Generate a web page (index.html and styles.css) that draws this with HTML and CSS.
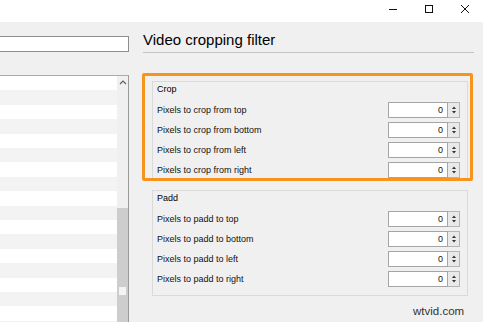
FILE: index.html
```html
<!DOCTYPE html>
<html lang="en">
<head>
    <meta charset="UTF-8">
    <title>Video cropping filter</title>
    <link rel="stylesheet" href="styles.css">
</head>
<body>
    <div class="titlebar">
        <div class="win-btn">
            <svg width="10" height="10" viewBox="0 0 10 10"><line x1="1" y1="5.5" x2="9" y2="5.5" stroke="#111" stroke-width="1"/></svg>
        </div>
        <div class="win-btn">
            <svg width="10" height="10" viewBox="0 0 10 10"><rect x="1.5" y="1.5" width="7" height="7" fill="none" stroke="#111" stroke-width="1"/></svg>
        </div>
        <div class="win-btn">
            <svg width="10" height="10" viewBox="0 0 10 10"><path d="M1 1 L9 9 M9 1 L1 9" stroke="#111" stroke-width="1"/></svg>
        </div>
    </div>

    <div class="main">
        <div class="side">
            <div class="search"></div>
            <div class="list">
                <div class="scrollbar">
                    <svg class="scroll-up" width="8" height="5" viewBox="0 0 8 5"><path d="M1 4 L4 1 L7 4" fill="none" stroke="#606060" stroke-width="1.2"/></svg>
                    <div class="thumb"><span class="thumb-mark"></span></div>
                </div>
            </div>
        </div>

        <div class="panel">
            <h1 class="title">Video cropping filter</h1>

            <div class="groups">
                <div class="group">
                    <div class="group-title">Crop</div>
                    <div class="rows">
                        <div class="row"><span>Pixels to crop from top</span><div class="spin"><div class="spin-field">0</div><div class="spin-btns"><svg width="8" height="12" viewBox="0 0 8 12"><path d="M2 5 L4 2.5 L6 5 Z M2 7 L4 9.5 L6 7 Z" fill="#333"/></svg></div></div></div>
                        <div class="row"><span>Pixels to crop from bottom</span><div class="spin"><div class="spin-field">0</div><div class="spin-btns"><svg width="8" height="12" viewBox="0 0 8 12"><path d="M2 5 L4 2.5 L6 5 Z M2 7 L4 9.5 L6 7 Z" fill="#333"/></svg></div></div></div>
                        <div class="row"><span>Pixels to crop from left</span><div class="spin"><div class="spin-field">0</div><div class="spin-btns"><svg width="8" height="12" viewBox="0 0 8 12"><path d="M2 5 L4 2.5 L6 5 Z M2 7 L4 9.5 L6 7 Z" fill="#333"/></svg></div></div></div>
                        <div class="row"><span>Pixels to crop from right</span><div class="spin"><div class="spin-field">0</div><div class="spin-btns"><svg width="8" height="12" viewBox="0 0 8 12"><path d="M2 5 L4 2.5 L6 5 Z M2 7 L4 9.5 L6 7 Z" fill="#333"/></svg></div></div></div>
                    </div>
                </div>

                <div class="group group-padd">
                    <div class="group-title">Padd</div>
                    <div class="rows">
                        <div class="row"><span>Pixels to padd to top</span><div class="spin"><div class="spin-field">0</div><div class="spin-btns"><svg width="8" height="12" viewBox="0 0 8 12"><path d="M2 5 L4 2.5 L6 5 Z M2 7 L4 9.5 L6 7 Z" fill="#333"/></svg></div></div></div>
                        <div class="row"><span>Pixels to padd to bottom</span><div class="spin"><div class="spin-field">0</div><div class="spin-btns"><svg width="8" height="12" viewBox="0 0 8 12"><path d="M2 5 L4 2.5 L6 5 Z M2 7 L4 9.5 L6 7 Z" fill="#333"/></svg></div></div></div>
                        <div class="row"><span>Pixels to padd to left</span><div class="spin"><div class="spin-field">0</div><div class="spin-btns"><svg width="8" height="12" viewBox="0 0 8 12"><path d="M2 5 L4 2.5 L6 5 Z M2 7 L4 9.5 L6 7 Z" fill="#333"/></svg></div></div></div>
                        <div class="row"><span>Pixels to padd to right</span><div class="spin"><div class="spin-field">0</div><div class="spin-btns"><svg width="8" height="12" viewBox="0 0 8 12"><path d="M2 5 L4 2.5 L6 5 Z M2 7 L4 9.5 L6 7 Z" fill="#333"/></svg></div></div></div>
                    </div>
                </div>

                <!-- annotation frame drawn over the Crop group -->
                <div class="highlight"></div>
            </div>
        </div>
    </div>

    <div class="watermark">wtvid.com</div>
</body>
</html>
```

FILE: styles.css
```css
body {
    margin: 0;
    width: 483px;
    height: 322px;
    overflow: hidden;
    background-color: #f0f0f0;
    font-family: "Liberation Sans", Arial, sans-serif;
    color: #000;
    position: relative;
}
.titlebar {
    height: 22px;
    background-color: #fff;
    display: flex;
    justify-content: flex-end;
}
.win-btn {
    width: 36px;
    height: 18px;
    display: flex;
    align-items: center;
    justify-content: center;
}
.main {
    display: flex;
    height: 300px;
}
.side {
    width: 129px;
    display: flex;
    flex-direction: column;
}
.search {
    margin-top: 14px;
    height: 14px;
    background-color: #fff;
    border: 1px solid #8e8e8e;
    border-left: none;
}
.list {
    flex: 1;
    margin-top: 23px;
    border-top: 1px solid #a9a9a9;
    border-right: 1px solid #9a9a9a;
    background: repeating-linear-gradient(#fff 0 14.4px, #f3f3f3 14.4px 28.8px);
    display: flex;
    justify-content: flex-end;
}
.scrollbar {
    width: 11px;
    background-color: #f0f0f0;
    display: flex;
    flex-direction: column;
    align-items: center;
}
.scroll-up {
    margin-top: 4px;
}
.thumb {
    margin-top: 123px;
    flex: 1;
    align-self: stretch;
    background-color: #cdcdcd;
    position: relative;
}
.thumb-mark {
    position: absolute;
    left: 2px;
    top: 79px;
    width: 7px;
    height: 8px;
    background-color: #f4f4f4;
}
.panel {
    flex: 1;
    padding: 0 9px 0 14px;
}
.title {
    margin: 9px 0 0;
    font-size: 15px;
    font-weight: normal;
    line-height: 18px;
    padding-bottom: 3px;
    border-bottom: 1px solid #c4c4c4;
}
.groups {
    position: relative;
    margin: 28px 6px 0 9px;
}
.group {
    border: 1px solid #dadada;
    padding: 1px 7px 1px 4px;
}
.group-padd {
    margin-top: 10px;
    padding-bottom: 8px;
}
.group-title {
    font-size: 9px;
    line-height: 12px;
    margin-bottom: 7px;
}
.rows {
    display: flex;
    flex-direction: column;
    gap: 4px;
}
.row {
    height: 16px;
    display: flex;
    align-items: center;
    justify-content: space-between;
    font-size: 9px;
    color: #111;
}
.spin {
    width: 72px;
    height: 16px;
    display: flex;
}
.spin-field {
    flex: 1;
    background-color: #fff;
    border: 1px solid #a5a5a5;
    text-align: right;
    padding-right: 4px;
    font-size: 9px;
    line-height: 14px;
}
.spin-btns {
    width: 11px;
    background-color: #e9e9e9;
    border: 1px solid #b5b5b5;
    border-left: none;
    display: flex;
    align-items: center;
    justify-content: center;
}
.highlight {
    position: absolute;
    left: -10px;
    right: -5px;
    top: -8px;
    height: 102px;
    border: 3px solid #f7941e;
    border-radius: 2px;
}
.watermark {
    position: absolute;
    left: 413px;
    top: 305px;
    font-size: 11.5px;
    color: #333;
}
```
